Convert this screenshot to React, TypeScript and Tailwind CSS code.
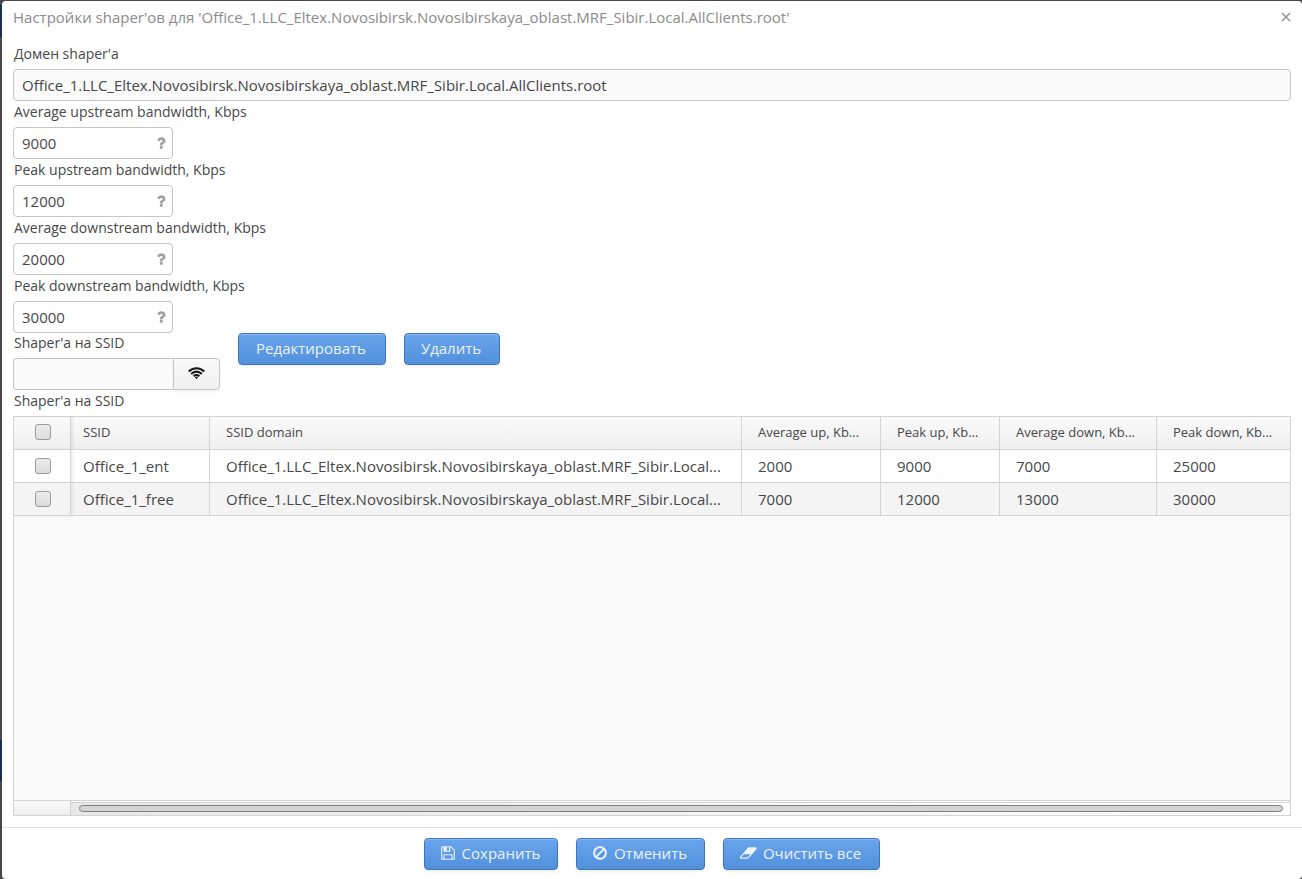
import { useState } from "react"

const BTN = "flex h-8 items-center justify-center gap-1.5 rounded border border-[#3d76b8] bg-gradient-to-b from-[#68a5ec] to-[#5390dc] pr-0.5 pb-0.5 text-[15px] text-[#ecf2f8] shadow-[inset_0_1px_0_#8abaf0,0_2px_3px_rgba(0,0,0,0.06)]"
const LABEL = "block h-[26px] pl-px text-sm leading-[22px]"
const BOX = "h-8 border border-[#c5c5c5] px-2 text-[15px] outline-none"

const limits = [
  { id: "avgUp", label: "Average upstream bandwidth, Kbps", value: "9000" },
  { id: "peakUp", label: "Peak upstream bandwidth, Kbps", value: "12000" },
  { id: "avgDown", label: "Average downstream bandwidth, Kbps", value: "20000" },
  { id: "peakDown", label: "Peak downstream bandwidth, Kbps", value: "30000" },
]

const columns = ["SSID", "SSID domain", "Average up, Kb...", "Peak up, Kb...", "Average down, Kb...", "Peak down, Kb..."]
const domain = "Office_1.LLC_Eltex.Novosibirsk.Novosibirskaya_oblast.MRF_Sibir.Local..."
const rows = [
  ["Office_1_ent", domain, "2000", "9000", "7000", "25000"],
  ["Office_1_free", domain, "7000", "12000", "13000", "30000"],
]

function Icon({ d, box = "0 0 1792 1792", className }: { d: string; box?: string; className: string }) {
  return <svg viewBox={box} fill="currentColor" aria-hidden="true" className={className}><path d={d} /></svg>
}

const QUESTION = "M1088 1256v240q0 16-12 28t-28 12h-240q-16 0-28-12t-12-28v-240q0-16 12-28t28-12h240q16 0 28 12t12 28zm316-600q0 54-15.5 101t-35 76.5-55 59.5-57.5 43.5-61 35.5q-41 23-68.5 65t-27.5 67q0 17-12 32.5t-28 15.5h-240q-15 0-25.5-18.5t-10.5-37.5v-45q0-83 65-156.5t143-108.5q59-27 84-56t25-76q0-42-46.5-74t-107.5-32q-65 0-108 29-35 25-107 115-13 16-31 16-12 0-25-8l-164-125q-13-10-15.5-25t5.5-28q160-266 464-266 80 0 161 31t146 83 106 127.5 41 158.5z"
const FLOPPY = "M512 1536h768v-384h-768v384zm896 0h128v-896q0-14-10-38.5t-20-34.5l-281-281q-10-10-34-20t-39-10v416q0 40-28 68t-68 28h-576q-40 0-68-28t-28-68v-416h-128v1280h128v-416q0-40 28-68t68-28h832q40 0 68 28t28 68v416zm-384-928v-320q0-13-9.5-22.5t-22.5-9.5h-192q-13 0-22.5 9.5t-9.5 22.5v320q0 13 9.5 22.5t22.5 9.5h192q13 0 22.5-9.5t9.5-22.5zm640 32v928q0 40-28 68t-68 28h-1344q-40 0-68-28t-28-68v-1344q0-40 28-68t68-28h928q40 0 88 20t76 48l280 280q28 28 48 76t20 88z"
const BAN = "M1440 893q0-161-87-295l-754 753q137 89 297 89 111 0 211.5-43.5t173.5-116.5 116-174.5 43-212.5zm-999 299l755-754q-135-91-300-91-148 0-273 73t-198 199-73 274q0 162 89 299zm1223-299q0 157-61 300t-163.5 246-245 164-298.5 61-298.5-61-245-164-163.5-246-61-300 61-299.5 163.5-245.5 245-164 298.5-61 298.5 61 245 164 163.5 245.5 61 299.5z"
const ERASER = "M832 1408l336-384h-768l-336 384h768zm1013-1077q15 34 9.5 71.5t-30.5 65.5l-896 1024q-38 44-96 44h-768q-38 0-69.5-20.5t-47.5-54.5q-15-34-9.5-71.5t30.5-65.5l896-1024q38-44 96-44h768q38 0 69.5 20.5t47.5 54.5z"

function Check({ label }: { label: string }) {
  return (
    <input
      type="checkbox"
      aria-label={label}
      className="block size-4 appearance-none rounded-[3px] border border-[#9c9c9c] bg-gradient-to-b from-[#ececec] to-[#dcdcdc] checked:from-[#68a5ec] checked:to-[#5390dc]"
    />
  )
}

export default function App() {
  const [form, setForm] = useState<Record<string, string>>(Object.fromEntries(limits.map(l => [l.id, l.value])))

  return (
    <div className="min-h-screen bg-[#48484a] bg-[linear-gradient(#48484a_5px,#17304f_5px,#17304f_37px,#48484a_37px,#48484a_740px,#17304f_740px,#17304f_781px,#48484a_781px)] pt-px pl-0.5 font-['Open_Sans','Noto_Sans',sans-serif] text-[#474747]">
      <div role="dialog" aria-labelledby="title" className="flex min-h-[calc(100vh-1px)] flex-col rounded bg-white">
        <header className="flex h-[42px] items-start justify-between pr-2.5 pl-[11px]">
          <h1 id="title" className="pt-1 text-[15px] leading-6 text-[#8b8b8b]">
            Настройки shaper'ов для 'Office_1.LLC_Eltex.Novosibirsk.Novosibirskaya_oblast.MRF_Sibir.Local.AllClients.root'
          </h1>
          <button aria-label="Закрыть" className="mt-2.5 flex size-3 items-center justify-center text-[#8b8b8b]">
            <svg viewBox="0 0 12 12" className="size-3" stroke="currentColor" strokeWidth="1.4"><path d="M2 2l8 8M10 2l-8 8" /></svg>
          </button>
        </header>

        <main className="flex grow flex-col px-[11px] pb-[11px]">
          <label htmlFor="domain" className={LABEL}>Домен shaper'а</label>
          <input id="domain" readOnly value="Office_1.LLC_Eltex.Novosibirsk.Novosibirskaya_oblast.MRF_Sibir.Local.AllClients.root" className={BOX + " w-full rounded bg-[#fafafa]"} />

          {limits.map(l => (
            <div key={l.id}>
              <label htmlFor={l.id} className={LABEL}>{l.label}</label>
              <div className="relative w-40">
                <input id={l.id} value={form[l.id]} onChange={e => setForm({ ...form, [l.id]: e.target.value })} className={BOX + " w-full rounded bg-white"} />
                <Icon d={QUESTION} className="absolute top-2 right-1 size-4 text-[#a0a0a0]" />
              </div>
            </div>
          ))}

          <div className="flex items-start gap-[18px]">
            <div>
              <label htmlFor="ssid" className="block h-[25px] pl-px text-sm leading-5">Shaper'а на SSID</label>
              <div className="flex">
                <input id="ssid" readOnly className={BOX + " w-40 rounded-l border-r-0 bg-[#fafafa]"} />
                <button aria-label="SSID" className="flex h-8 w-[47px] items-center justify-center rounded-r border border-[#c5c5c5] bg-gradient-to-b from-[#fafafa] to-[#efefef] pb-0.5 text-[#191919] shadow-[0_2px_3px_rgba(0,0,0,0.05)]">
                  <svg viewBox="0 0 17 12" className="h-3 w-[17px]" fill="none" stroke="currentColor" strokeWidth="2.1">
                    <path d="M.8 4.5a10.8 10.8 0 0 1 15.4 0M3.2 6.9a7.4 7.4 0 0 1 10.6 0M5.7 9.2a4 4 0 0 1 5.6 0" />
                    <path d="M8.5 9.4l1.7 1L8.5 12l-1.7-1.6z" fill="currentColor" stroke="none" />
                  </svg>
                </button>
              </div>
            </div>
            <button className={BTN + " w-[148px]"}>Редактировать</button>
            <button className={BTN + " w-24"}>Удалить</button>
          </div>

          <div id="grid-caption" className={LABEL}>Shaper'а на SSID</div>
          <div className="flex grow flex-col border border-[#d4d4d4] bg-[#fafafa]">
            <table aria-labelledby="grid-caption" className="w-full table-fixed border-separate border-spacing-0 text-left">
              <colgroup>
                <col className="w-[57px]" />
                <col className="w-[139px]" />
                <col />
                <col className="w-[139px]" />
                <col className="w-[119px]" />
                <col className="w-[157px]" />
                <col className="w-[133px]" />
              </colgroup>
              <thead>
                <tr className="h-[33px] bg-gradient-to-b from-[#fafafa] to-[#efefef] text-[13px]">
                  <th className="border-r border-b border-[#d4d4d4] pb-0.5 pl-[21px] shadow-[2px_0_3px_rgba(0,0,0,0.08)]"><Check label="Выбрать все" /></th>
                  {columns.map((c, i) => (
                    <th key={c} className={"overflow-hidden whitespace-nowrap border-b border-[#d4d4d4] font-normal not-last:border-r " + (i ? "pl-4" : "pl-3")}>{c}</th>
                  ))}
                </tr>
              </thead>
              <tbody>
                {rows.map(r => (
                  <tr key={r[0]} className="h-[33px] bg-white text-[15px] even:bg-[#f4f4f4]">
                    <td className="border-r border-b border-[#d4d4d4] pl-[21px] shadow-[2px_0_3px_rgba(0,0,0,0.08)]"><Check label={r[0]} /></td>
                    {r.map((v, i) => (
                      <td key={i} className={"overflow-hidden whitespace-nowrap border-b border-[#d4d4d4] not-last:border-r " + (i ? "pl-4" : "pl-3")}>{v}</td>
                    ))}
                  </tr>
                ))}
              </tbody>
            </table>
            <div className="mt-auto flex h-[15px] border-t border-[#d4d4d4]">
              <div className="w-[57px] border-r border-[#d4d4d4] bg-gradient-to-b from-[#fafafa] to-[#efefef]" />
              <div className="mt-px grow border-t border-[#d4d4d4] bg-gradient-to-r from-[#e8e8e8] to-white pt-0.5 pr-[7px] pl-2">
                <div className="h-[7px] rounded-full border border-[#808080] bg-[#d4d4d4]" />
              </div>
            </div>
          </div>
        </main>

        <footer className="flex h-[52px] items-start justify-center gap-[18px] border-t border-[#dfdfdf] pt-2.5">
          <button className={BTN + " w-[134px]"}><Icon d={FLOPPY} className="size-4" />Сохранить</button>
          <button className={BTN + " w-[129px]"}><Icon d={BAN} className="size-4" />Отменить</button>
          <button className={BTN + " w-[157px]"}><Icon d={ERASER} box="0 0 1856 1792" className="h-4 w-[17px]" />Очистить все</button>
        </footer>
      </div>
    </div>
  )
}
